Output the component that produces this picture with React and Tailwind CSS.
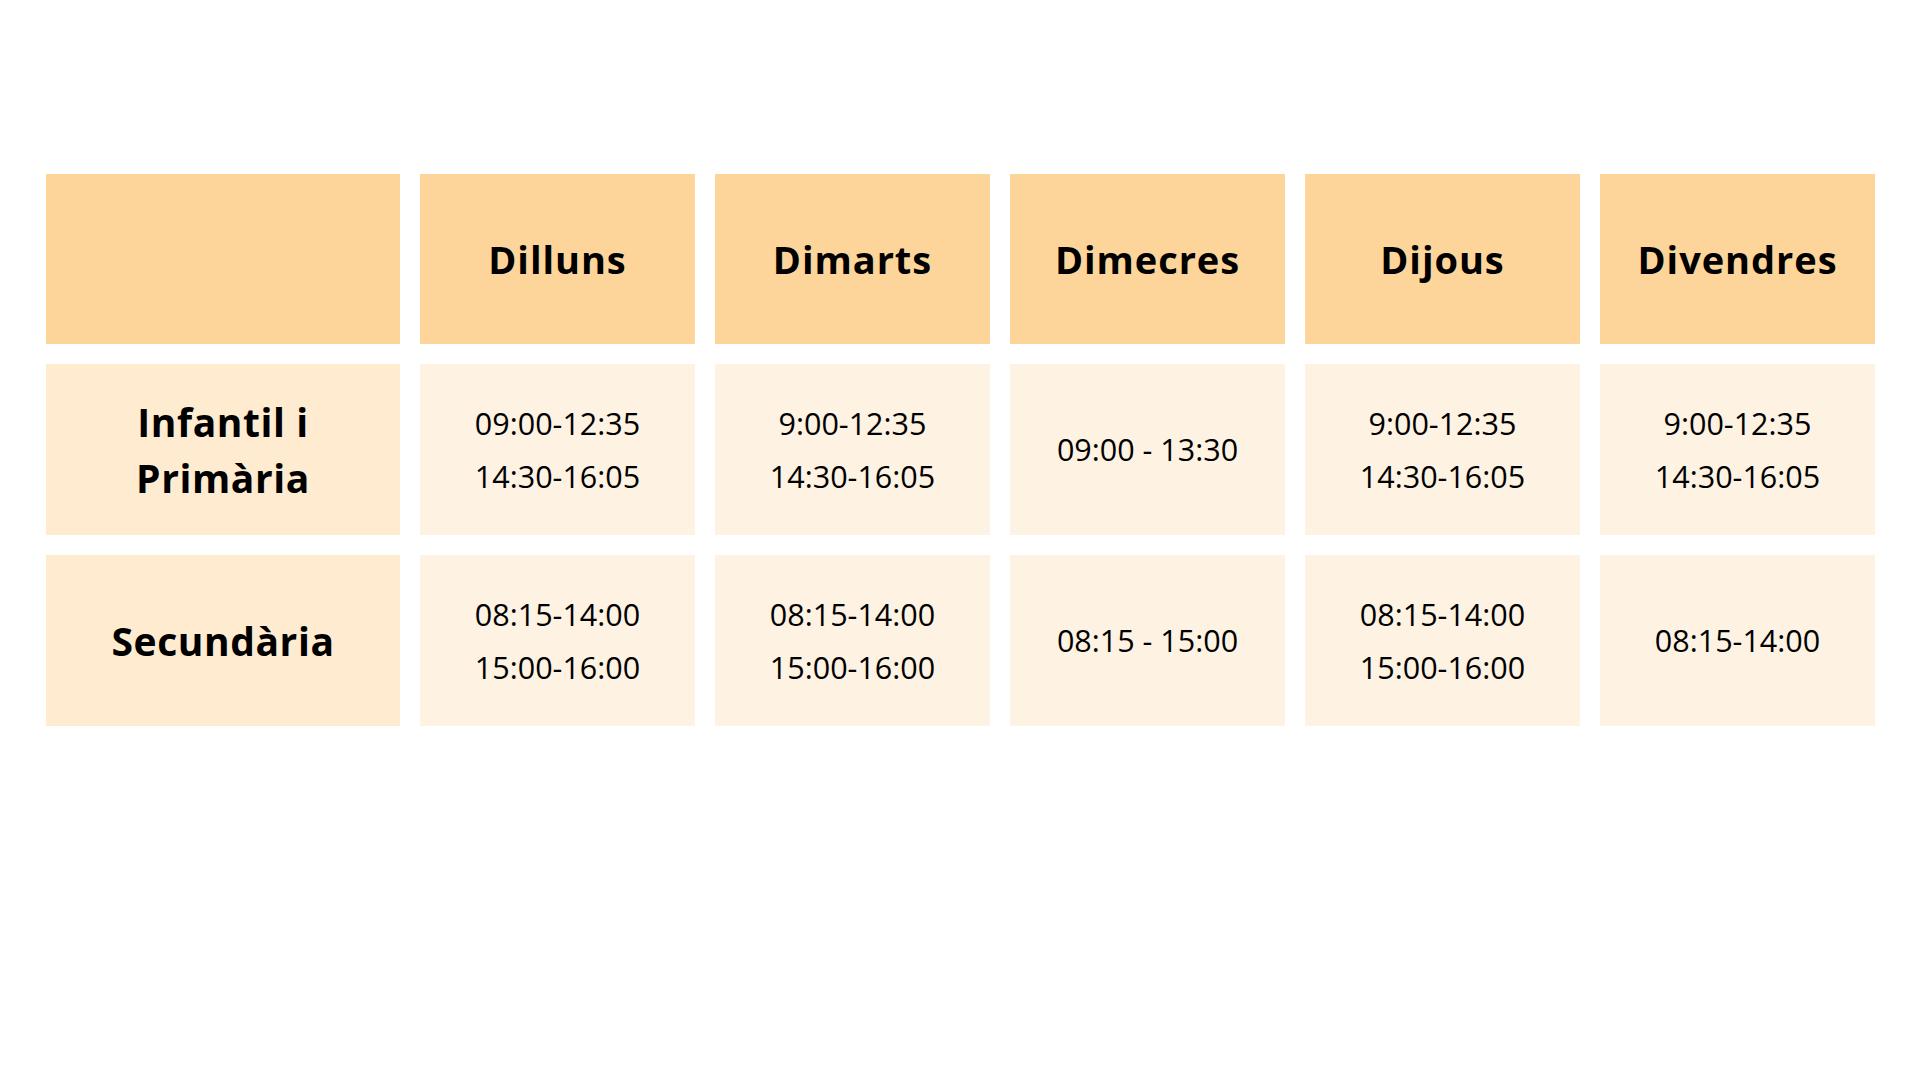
const days = ["Dilluns", "Dimarts", "Dimecres", "Dijous", "Divendres"];

const rows = [
  {
    label: ["Infantil i", "Primària"],
    cells: [
      ["09:00-12:35", "14:30-16:05"],
      ["9:00-12:35", "14:30-16:05"],
      ["09:00 - 13:30"],
      ["9:00-12:35", "14:30-16:05"],
      ["9:00-12:35", "14:30-16:05"],
    ],
  },
  {
    label: ["Secundària"],
    cells: [
      ["08:15-14:00", "15:00-16:00"],
      ["08:15-14:00", "15:00-16:00"],
      ["08:15 - 15:00"],
      ["08:15-14:00", "15:00-16:00"],
      ["08:15-14:00"],
    ],
  },
];

export default function App() {
  return (
    <div
      className="w-[1920px] h-[1080px] bg-white pt-[174px] pl-[46px] text-black"
      style={{ fontFamily: '"Open Sans", "Noto Sans", sans-serif' }}
    >
      <div className="grid grid-cols-[354px_275px_275px_275px_275px_275px] grid-rows-[170px_171px_171px] gap-[20px] w-fit">
        <div className="bg-[#fdd59a]" />
        {days.map((d) => (
          <div
            key={d}
            className="bg-[#fdd59a] flex items-center justify-center text-[38px] font-bold tracking-[0.025em]"
          >
            {d}
          </div>
        ))}

        {rows.map((row) => (
          <>
            <div
              key={row.label[0]}
              className="bg-[#feebd0] flex flex-col items-center justify-center text-[39px] font-bold leading-[56px] tracking-[0.015em]"
            >
              {row.label.map((l) => (
                <span key={l}>{l}</span>
              ))}
            </div>
            {row.cells.map((lines, i) => (
              <div
                key={row.label[0] + i}
                className="bg-[#fef2e3] flex flex-col items-center justify-center text-[30.5px] leading-[53px]"
              >
                {lines.map((l) => (
                  <span key={l}>{l}</span>
                ))}
              </div>
            ))}
          </>
        ))}
      </div>
    </div>
  );
}
